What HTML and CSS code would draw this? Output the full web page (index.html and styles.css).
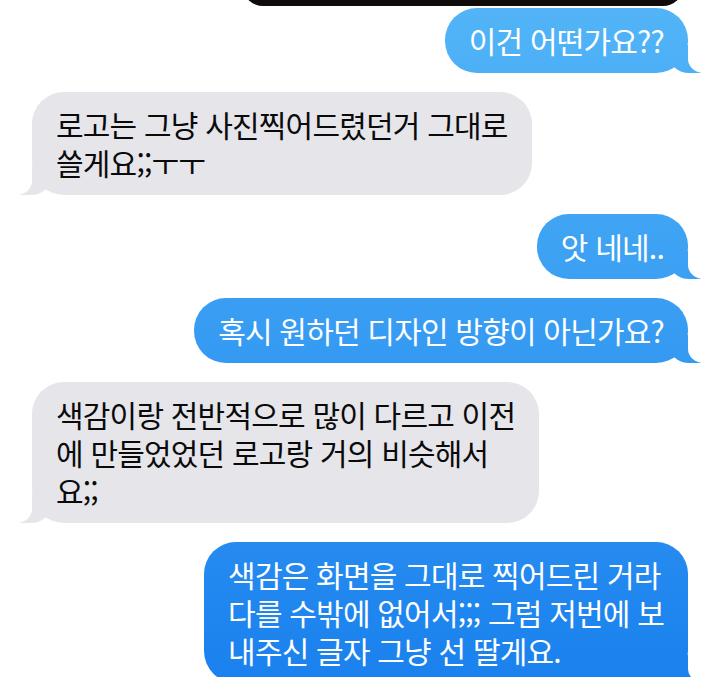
FILE: index.html
```html
<!DOCTYPE html>
<html lang="ko">
<head>
    <meta charset="UTF-8">
    <meta name="viewport" content="width=device-width, initial-scale=1.0">
    <title>메시지</title>
    <link rel="stylesheet" href="styles.css">
</head>
<body>

    <div class="chat">
        <div class="photo"></div>

        <div class="bubble out">
            <span class="line">이건 어떤가요??</span>
        </div>
        <div class="bubble in">
            <span class="line">로고는 그냥 사진찍어드렸던거 그대로</span>
            <span class="line">쓸게요;;ㅜㅜ</span>
        </div>
        <div class="bubble out">
            <span class="line">앗 네네..</span>
        </div>
        <div class="bubble out">
            <span class="line">혹시 원하던 디자인 방향이 아닌가요?</span>
        </div>
        <div class="bubble in">
            <span class="line">색감이랑 전반적으로 많이 다르고 이전</span>
            <span class="line">에 만들었었던 로고랑 거의 비슷해서</span>
            <span class="line">요;;</span>
        </div>
        <div class="bubble out">
            <span class="line">색감은 화면을 그대로 찍어드린 거라</span>
            <span class="line">다를 수밖에 없어서;;; 그럼 저번에 보</span>
            <span class="line">내주신 글자 그냥 선 딸게요.</span>
        </div>
    </div>

</body>
</html>
```

FILE: styles.css
```css
/* General Styling */
* {
    box-sizing: border-box;
    margin: 0;
    padding: 0;
}

body {
    background: #ffffff;
    font-family: 'Noto Sans CJK KR', 'Noto Sans', sans-serif;
    height: 100vh;
    overflow: hidden;
}

.chat {
    display: flex;
    flex-direction: column;
    padding: 0 32px;
}

/* Photo message, only its bottom edge is visible */
.photo {
    align-self: flex-end;
    width: 440px;
    height: 40px;
    margin-top: -34px;
    margin-right: 5px;
    margin-bottom: 2px;
    border-radius: 22px;
    background: #0e0b0a;
}

/* Bubbles */
.bubble {
    position: relative;
    padding: 13px 24px 14px;
    border-radius: 32px;
    font-size: 30px;
    letter-spacing: -0.8px;
    white-space: nowrap;
    margin-bottom: 19px;
}

.line {
    display: block;
    height: 38px;
    line-height: 38px;
}

.bubble::before,
.bubble::after {
    content: "";
    position: absolute;
    bottom: 0;
    height: 28px;
}

.out {
    align-self: flex-end;
    color: #ffffff;
    background: linear-gradient(#53b5f7, #1a81ee) fixed;
}

.out::before {
    right: -13px;
    width: 32px;
    background: linear-gradient(#53b5f7, #1a81ee) fixed;
    border-bottom-left-radius: 20px 18px;
}

.out::after {
    right: -34px;
    width: 34px;
    background: #ffffff;
    border-bottom-left-radius: 16px 14px;
}

.in {
    align-self: flex-start;
    color: #0a0a0a;
    background: #e5e5ea;
}

.in::before {
    left: -13px;
    width: 32px;
    background: #e5e5ea;
    border-bottom-right-radius: 20px 18px;
}

.in::after {
    left: -34px;
    width: 34px;
    background: #ffffff;
    border-bottom-right-radius: 16px 14px;
}
```
